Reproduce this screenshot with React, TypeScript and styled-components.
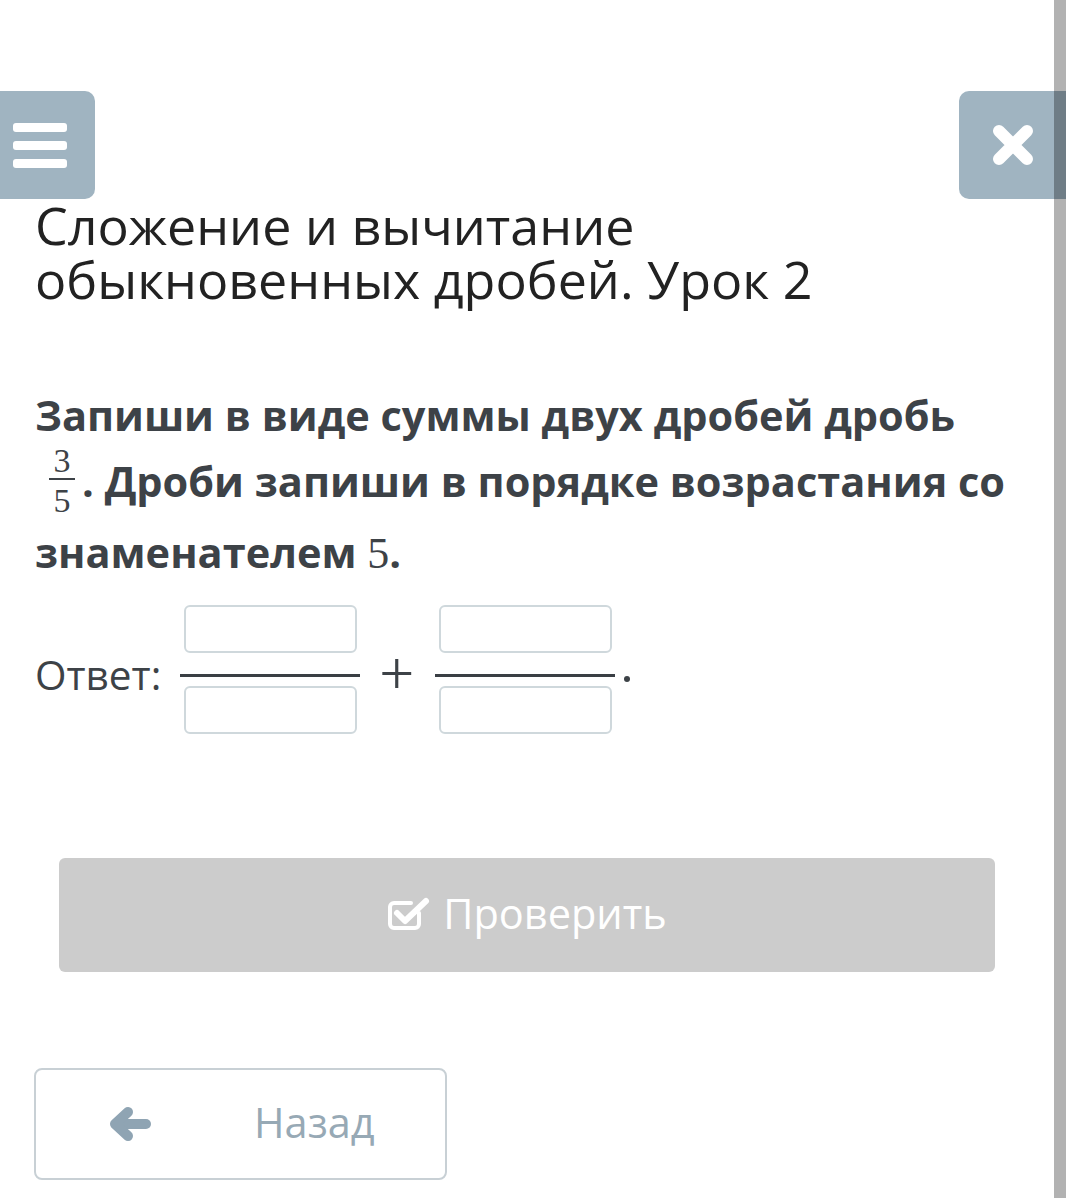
import styled, { createGlobalStyle } from "styled-components";

const GlobalStyle = createGlobalStyle`
  html, body {
    margin: 0;
    padding: 0;
    background: #fff;
  }
  body {
    font-family: "Open Sans", "Liberation Sans", sans-serif;
    overflow: hidden;
  }
`;

const Page = styled.div`
  position: relative;
  width: 1066px;
  height: 1198px;
  padding-top: 91px;
  box-sizing: border-box;
  overflow: hidden;
`;

const Scrollbar = styled.div`
  position: fixed;
  top: 0;
  right: 0;
  width: 12px;
  height: 100%;
  background: rgba(0, 0, 0, 0.3);
`;

const TopBar = styled.div`
  display: flex;
  justify-content: space-between;
  height: 108px;
`;

const MenuButton = styled.button`
  width: 95px;
  height: 108px;
  border: none;
  border-radius: 0 10px 10px 0;
  background: #a0b4c1;
  padding: 0 0 0 13px;
  display: flex;
  flex-direction: column;
  justify-content: center;
  gap: 9px;
`;

const MenuLine = styled.span`
  display: block;
  width: 54px;
  height: 9px;
  border-radius: 3px;
  background: #fff;
`;

const CloseButton = styled.button`
  width: 107px;
  height: 108px;
  border: none;
  border-radius: 10px 0 0 10px;
  background: #a0b4c1;
  padding: 0 0 0 33px;
  display: flex;
  align-items: center;
`;

const Content = styled.div`
  padding: 0 0 0 35px;
  color: #3d4247;
`;

const Title = styled.h1`
  margin: -1px 0 0;
  font-weight: 400;
  font-size: 52px;
  line-height: 54px;
  color: #222;
`;

const Question = styled.p`
  margin: 77px 0 0;
  font-weight: 700;
  font-size: 41.5px;
  line-height: 65.5px;
  color: #3d4247;
  padding-right: 46px;
`;

const NoWrap = styled.span`
  white-space: nowrap;
`;

const MathFrac = styled.span`
  display: inline-flex;
  flex-direction: column;
  align-items: center;
  vertical-align: middle;
  font-family: "Liberation Serif", serif;
  font-weight: 400;
  font-size: 34px;
  line-height: 30px;
  margin: 0 7px 0 14px;
  position: relative;
  top: -4px;
`;

const MathBar = styled.span`
  display: block;
  width: 26px;
  height: 2px;
  background: #3d4247;
  margin: 2px 0 6px;
`;

const MathNum = styled.span`
  font-family: "Liberation Serif", serif;
  font-weight: 400;
  font-size: 44px;
  line-height: 1;
`;

const AnswerRow = styled.div`
  display: flex;
  align-items: center;
  margin-top: 19px;
`;

const Label = styled.span`
  font-size: 40.5px;
  line-height: 1;
  color: #3d4247;
  margin: 12px 19px 0 0;
`;

const Fraction = styled.div`
  display: flex;
  flex-direction: column;
  align-items: center;
  width: 180px;
`;

const Input = styled.input`
  width: 173px;
  height: 48px;
  box-sizing: border-box;
  border: 2px solid #cfd8dc;
  border-radius: 6px;
  background: #fff;
`;

const FracBar = styled.div<{ $top: number; $bottom: number }>`
  width: 180px;
  height: 3px;
  background: #3a3f44;
  margin: ${(p) => `${p.$top}px 0 ${p.$bottom}px`};
`;

const Plus = styled.span`
  font-family: "Liberation Serif", serif;
  font-size: 62px;
  line-height: 1;
  color: #3d4247;
  margin: 8px 21px 0 19px;
`;

const Dot = styled.span`
  width: 6px;
  height: 6px;
  border-radius: 50%;
  background: #3d4247;
  margin: 20px 0 0 9px;
`;

const CheckButton = styled.button`
  margin: 124px 59px 0 24px;
  width: 936px;
  height: 114px;
  border: none;
  border-radius: 6px;
  background: #cccccc;
  color: #fff;
  display: flex;
  align-items: center;
  justify-content: center;
  gap: 12px;
  font-family: "Open Sans", sans-serif;
  font-size: 41.5px;
  padding: 0 0 4px;
`;

const BackButton = styled.button`
  margin: 96px 0 0 -1px;
  width: 413px;
  height: 112px;
  border: 2px solid #c8d0d5;
  border-radius: 8px;
  background: #fff;
  display: flex;
  align-items: center;
  padding: 0 0 0 72px;
  color: #97a9b5;
  font-family: "Open Sans", sans-serif;
  font-size: 41.5px;
  box-sizing: border-box;
`;

const BackText = styled.span`
  margin-left: 102px;
  padding-bottom: 4px;
`;

function CheckIcon() {
  return (
    <svg width="44" height="36" viewBox="0 0 44 36" fill="none">
      <path
        d="M32 18 V29 a4 4 0 0 1 -4 4 H7 a4 4 0 0 1 -4 -4 V12 a4 4 0 0 1 4 -4 H24"
        stroke="#fff"
        strokeWidth="4"
        strokeLinecap="round"
      />
      <path
        d="M10 18 L18 26 L39 6"
        stroke="#fff"
        strokeWidth="6"
        strokeLinecap="round"
        strokeLinejoin="round"
      />
    </svg>
  );
}

function ArrowLeft() {
  return (
    <svg width="44" height="36" viewBox="0 0 44 36" fill="none">
      <path d="M38 18 H10" stroke="#8fa4b3" strokeWidth="10" strokeLinecap="round" />
      <path
        d="M20 6 L7 18 L20 30"
        stroke="#8fa4b3"
        strokeWidth="10"
        strokeLinecap="round"
        strokeLinejoin="round"
      />
    </svg>
  );
}

function CrossIcon() {
  return (
    <svg width="42" height="42" viewBox="0 0 42 42" fill="none">
      <path d="M7 7 L35 35 M35 7 L7 35" stroke="#fff" strokeWidth="12" strokeLinecap="round" />
    </svg>
  );
}

export default function App() {
  return (
    <>
      <GlobalStyle />
      <Page>
        <TopBar>
          <MenuButton aria-label="Меню">
            <MenuLine />
            <MenuLine />
            <MenuLine />
          </MenuButton>
          <CloseButton aria-label="Закрыть">
            <CrossIcon />
          </CloseButton>
        </TopBar>
        <Content>
          <Title>
            Сложение и вычитание
            <br />
            обыкновенных дробей. Урок 2
          </Title>
          <Question>
            Запиши в виде суммы двух дробей дробь{" "}
            <NoWrap>
              <MathFrac>
                <span>3</span>
                <MathBar />
                <span>5</span>
              </MathFrac>
              .
            </NoWrap>{" "}
            Дроби запиши в порядке возрастания со знаменателем <MathNum>5</MathNum>.
          </Question>
          <AnswerRow>
            <Label>Ответ:</Label>
            <Fraction>
              <Input />
              <FracBar $top={21} $bottom={9} />
              <Input />
            </Fraction>
            <Plus>+</Plus>
            <Fraction>
              <Input />
              <FracBar $top={21} $bottom={9} />
              <Input />
            </Fraction>
            <Dot />
          </AnswerRow>
          <CheckButton>
            <CheckIcon />
            Проверить
          </CheckButton>
          <BackButton>
            <ArrowLeft />
            <BackText>Назад</BackText>
          </BackButton>
        </Content>
        <Scrollbar />
      </Page>
    </>
  );
}
